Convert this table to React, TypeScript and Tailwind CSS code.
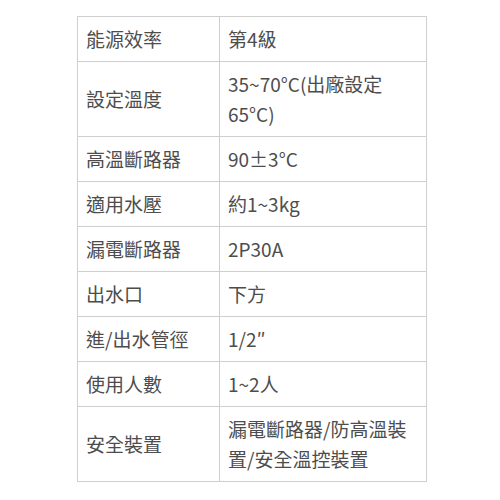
import React from "react";

const rows: [string, string][] = [
  ["能源效率", "第4級"],
  ["設定溫度", "35~70°C(出廠設定65°C)"],
  ["高溫斷路器", "90±3°C"],
  ["適用水壓", "約1~3kg"],
  ["漏電斷路器", "2P30A"],
  ["出水口", "下方"],
  ["進/出水管徑", "1/2″"],
  ["使用人數", "1~2人"],
  ["安全裝置", "漏電斷路器/防高溫裝置/安全溫控裝置"],
];

const App = () => {
  return (
    <div lang="zh-TW" className="w-[500px] h-[500px] bg-white pt-[16px] pl-[77px]">
      <table
        className="w-[350px] border-collapse text-[19px] leading-[30px] text-[#4d4d4d]"
        style={{ fontFamily: '"Noto Sans CJK TC", "Noto Sans", sans-serif' }}
      >
        <tbody>
          {rows.map(([k, v]) => (
            <tr key={k}>
              <td className="w-[142px] border border-[#cfcfcf] px-[8px] py-[7px] align-middle">
                {k}
              </td>
              <td className="border border-[#cfcfcf] px-[8px] py-[7px] align-middle">
                {v}
              </td>
            </tr>
          ))}
        </tbody>
      </table>
    </div>
  );
};

export default App;
